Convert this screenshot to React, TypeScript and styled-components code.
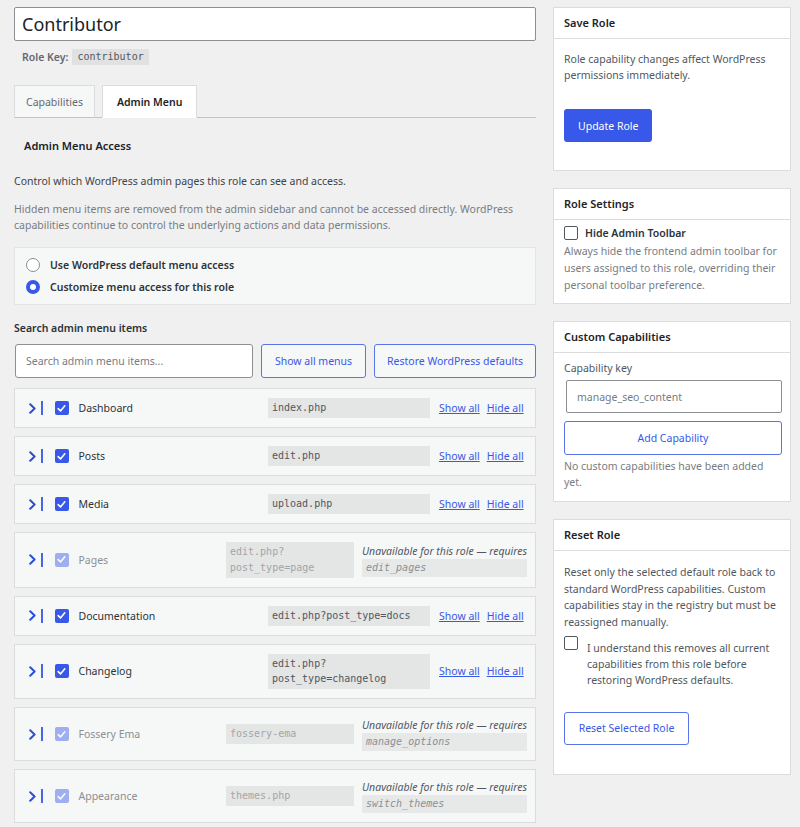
import React from "react";
import styled, { createGlobalStyle, css } from "styled-components";

const GlobalStyle = createGlobalStyle`
  html, body {
    margin: 0;
    background: #f0f0f1;
  }
  body {
    font-family: "Noto Sans", "Open Sans", sans-serif;
    font-size: 10.5px;
    line-height: 16px;
    color: #3c434a;
  }
  * {
    box-sizing: border-box;
  }
`;

const BLUE = "#3858e9";
const MONO = `"DejaVu Sans Mono", "Liberation Mono", monospace`;

type MenuItem = {
  name: string;
  slug: string;
  enabled: boolean;
  cap?: string;
};

const menuItems: MenuItem[] = [
  { name: "Dashboard", slug: "index.php", enabled: true },
  { name: "Posts", slug: "edit.php", enabled: true },
  { name: "Media", slug: "upload.php", enabled: true },
  { name: "Pages", slug: "edit.php?post_type=page", enabled: false, cap: "edit_pages" },
  { name: "Documentation", slug: "edit.php?post_type=docs", enabled: true },
  { name: "Changelog", slug: "edit.php?post_type=changelog", enabled: true },
  { name: "Fossery Ema", slug: "fossery-ema", enabled: false, cap: "manage_options" },
  { name: "Appearance", slug: "themes.php", enabled: false, cap: "switch_themes" },
];

const Chevron = () => (
  <svg width="7" height="11" viewBox="0 0 7 11" fill="none">
    <path d="M1.2 1.2 L5.6 5.5 L1.2 9.8" stroke="#2f4fd6" strokeWidth="2" strokeLinecap="round" strokeLinejoin="round" />
  </svg>
);

const CheckMark = () => (
  <svg width="9" height="9" viewBox="0 0 9 9" fill="none">
    <path d="M1.2 4.6 L3.5 6.9 L7.8 1.8" stroke="#fff" strokeWidth="1.6" strokeLinecap="round" strokeLinejoin="round" />
  </svg>
);

export default function App() {
  return (
    <>
      <GlobalStyle />
      <Page>
        <Main>
          <TitleInput defaultValue="Contributor" />
          <RoleKey>
            Role Key: <KeyCode>contributor</KeyCode>
          </RoleKey>

          <Tabs>
            <Tab>Capabilities</Tab>
            <Tab $active>Admin Menu</Tab>
          </Tabs>

          <SectionTitle>Admin Menu Access</SectionTitle>
          <Intro>Control which WordPress admin pages this role can see and access.</Intro>
          <Muted>
            Hidden menu items are removed from the admin sidebar and cannot be accessed directly. WordPress
            capabilities continue to control the underlying actions and data permissions.
          </Muted>

          <RadioBox>
            <RadioRow>
              <Radio />
              Use WordPress default menu access
            </RadioRow>
            <RadioRow>
              <Radio $checked />
              Customize menu access for this role
            </RadioRow>
          </RadioBox>

          <FieldLabel>Search admin menu items</FieldLabel>
          <Toolbar>
            <SearchInput placeholder="Search admin menu items..." />
            <OutlineButton $width={105}>Show all menus</OutlineButton>
            <OutlineButton $width={162}>Restore WordPress defaults</OutlineButton>
          </Toolbar>

          <MenuList>
            {menuItems.map((item) => (
              <MenuRow key={item.name}>
                <Expander>
                  <Chevron />
                  <ExpanderBar />
                </Expander>
                <MenuCheck $disabled={!item.enabled}>
                  <CheckMark />
                </MenuCheck>
                <MenuName $disabled={!item.enabled}>{item.name}</MenuName>
                <Slug $width={item.enabled ? 162 : 128} $disabled={!item.enabled}>
                  {item.slug}
                </Slug>
                {item.enabled ? (
                  <Actions>
                    <ActionLink href="#">Show all</ActionLink>
                    <ActionLink href="#">Hide all</ActionLink>
                  </Actions>
                ) : (
                  <Notice>
                    <NoticeText>Unavailable for this role — requires</NoticeText>
                    <NoticeCode>{item.cap}</NoticeCode>
                  </Notice>
                )}
              </MenuRow>
            ))}
          </MenuList>
        </Main>

        <Sidebar>
          <Panel>
            <PanelHeader>Save Role</PanelHeader>
            <PanelBody $pad="12px 10px 28px">
              <PanelText>Role capability changes affect WordPress permissions immediately.</PanelText>
              <PrimaryButton>Update Role</PrimaryButton>
            </PanelBody>
          </Panel>

          <Panel>
            <PanelHeader>Role Settings</PanelHeader>
            <PanelBody $pad="5px 10px 9px">
              <ToggleRow>
                <Box />
                Hide Admin Toolbar
              </ToggleRow>
              <Description>
                Always hide the frontend admin toolbar for users assigned to this role, overriding their
                personal toolbar preference.
              </Description>
            </PanelBody>
          </Panel>

          <Panel>
            <PanelHeader>Custom Capabilities</PanelHeader>
            <PanelBody $pad="7px 10px 11px">
              <PanelText>Capability key</PanelText>
              <CapInput placeholder="manage_seo_content" />
              <WideButton>Add Capability</WideButton>
              <EmptyNote>No custom capabilities have been added yet.</EmptyNote>
            </PanelBody>
          </Panel>

          <Panel>
            <PanelHeader>Reset Role</PanelHeader>
            <PanelBody $pad="13px 10px 29px">
              <ResetText>
                Reset only the selected default role back to standard WordPress capabilities. Custom
                capabilities stay in the registry but must be reassigned manually.
              </ResetText>
              <ConfirmRow>
                <Box />
                <ConfirmLabel>
                  I understand this removes all current capabilities from this role before restoring
                  WordPress defaults.
                </ConfirmLabel>
              </ConfirmRow>
              <ResetButton>Reset Selected Role</ResetButton>
            </PanelBody>
          </Panel>
        </Sidebar>
      </Page>
    </>
  );
}

const Page = styled.div`
  display: grid;
  grid-template-columns: 522px 238px;
  column-gap: 17px;
  align-items: start;
  padding: 7px 9px 0 14px;
`;

const Main = styled.div`
  display: flex;
  flex-direction: column;
`;

const TitleInput = styled.input`
  height: 34px;
  width: 100%;
  padding: 0 7px;
  border: 1px solid #8c8f94;
  border-radius: 2px;
  background: #fff;
  font-family: "Noto Sans", sans-serif;
  font-size: 18px;
  color: #1d2327;
  outline: none;
`;

const RoleKey = styled.div`
  display: flex;
  align-items: center;
  gap: 4px;
  margin-top: 8px;
  padding-left: 8px;
  font-weight: 600;
  color: #646970;
`;

const KeyCode = styled.code`
  font-family: ${MONO};
  font-size: 10px;
  line-height: 16px;
  padding: 0 5px;
  background: #e1e1e2;
  color: #50575e;
  font-weight: 400;
`;

const Tabs = styled.div`
  display: flex;
  gap: 7px;
  margin-top: 20px;
  border-bottom: 1px solid #c3c4c7;
`;

const Tab = styled.div<{ $active?: boolean }>`
  height: 33px;
  margin-bottom: -1px;
  padding: 0 11px;
  display: flex;
  align-items: center;
  border: 1px solid #dcdcde;
  border-bottom: 1px solid #c3c4c7;
  background: #f6f7f7;
  color: #646970;
  font-size: 10.5px;
  ${({ $active }) =>
    $active &&
    css`
      background: #fff;
      border-bottom-color: #fff;
      color: #1d2327;
      font-weight: 600;
      padding: 0 14px;
    `}
`;

const SectionTitle = styled.h3`
  margin: 20px 0 0 10px;
  font-size: 11px;
  line-height: 16px;
  font-weight: 600;
  color: #1d2327;
`;

const Intro = styled.p`
  margin: 19px 0 0;
  color: #3c434a;
`;

const Muted = styled.p`
  margin: 12px 0 0;
  color: #787c82;
`;

const RadioBox = styled.div`
  margin-top: 14px;
  padding: 9px 11px;
  display: flex;
  flex-direction: column;
  gap: 6px;
  background: #f6f7f7;
  border: 1px solid #e2e4e7;
`;

const RadioRow = styled.label`
  display: flex;
  align-items: center;
  gap: 10px;
  font-weight: 600;
  color: #2c3338;
`;

const Radio = styled.span<{ $checked?: boolean }>`
  width: 14px;
  height: 14px;
  border-radius: 50%;
  background: #fff;
  border: 1px solid #8c8f94;
  ${({ $checked }) =>
    $checked &&
    css`
      border: 4px solid ${BLUE};
    `}
`;

const FieldLabel = styled.div`
  margin-top: 15px;
  font-weight: 600;
  color: #2c3338;
`;

const Toolbar = styled.div`
  display: flex;
  gap: 8px;
  margin-top: 8px;
  padding-left: 1px;
`;

const SearchInput = styled.input`
  width: 238px;
  height: 34px;
  padding: 0 10px;
  border: 1px solid #8c8f94;
  border-radius: 3px;
  background: #fff;
  font-family: "Noto Sans", sans-serif;
  font-size: 10.5px;
  &::placeholder {
    color: #787c82;
  }
`;

const OutlineButton = styled.button<{ $width: number }>`
  width: ${({ $width }) => $width}px;
  height: 34px;
  padding: 0;
  border: 1px solid #5b73e8;
  border-radius: 3px;
  background: #f6f7f7;
  color: ${BLUE};
  font-family: "Noto Sans", sans-serif;
  font-size: 10.5px;
`;

const MenuList = styled.div`
  display: flex;
  flex-direction: column;
  gap: 8px;
  margin-top: 10px;
`;

const MenuRow = styled.div`
  display: flex;
  align-items: center;
  min-height: 40px;
  padding: 9px 8px 9px 14px;
  background: #f6f7f7;
  border: 1px solid #dcdcde;
`;

const Expander = styled.span`
  display: flex;
  align-items: center;
  gap: 5px;
`;

const ExpanderBar = styled.span`
  width: 1.5px;
  height: 14px;
  background: #4a66e6;
`;

const MenuCheck = styled.span<{ $disabled?: boolean }>`
  display: flex;
  align-items: center;
  justify-content: center;
  width: 14px;
  height: 14px;
  margin-left: 12px;
  border-radius: 2px;
  background: ${BLUE};
  opacity: ${({ $disabled }) => ($disabled ? 0.45 : 1)};
`;

const MenuName = styled.span<{ $disabled?: boolean }>`
  flex: 1;
  margin-left: 10px;
  color: ${({ $disabled }) => ($disabled ? "#8c8f94" : "#2c3338")};
`;

const Slug = styled.code<{ $width: number; $disabled?: boolean }>`
  width: ${({ $width }) => $width}px;
  padding: 2.25px 4px;
  font-family: ${MONO};
  font-size: 10px;
  line-height: 15.5px;
  background: rgba(0, 0, 0, 0.07);
  color: ${({ $disabled }) => ($disabled ? "#a2a5a9" : "#50575e")};
`;

const Actions = styled.span`
  display: flex;
  gap: 7px;
  width: 88px;
  margin-left: 9px;
`;

const ActionLink = styled.a`
  color: ${BLUE};
  text-decoration: underline;
  white-space: nowrap;
`;

const Notice = styled.span`
  display: flex;
  flex-direction: column;
  width: 165px;
  margin-left: 8px;
`;

const NoticeText = styled.span`
  font-style: italic;
  white-space: nowrap;
  color: #50575e;
`;

const NoticeCode = styled.code`
  padding: 1px 4px;
  font-family: ${MONO};
  font-size: 10px;
  line-height: 16px;
  font-style: italic;
  background: rgba(0, 0, 0, 0.06);
  color: #8c8f94;
`;

const Sidebar = styled.div`
  display: flex;
  flex-direction: column;
  gap: 17px;
`;

const Panel = styled.section`
  background: #fff;
  border: 1px solid #dcdcde;
`;

const PanelHeader = styled.h2`
  margin: 0;
  height: 31px;
  padding: 0 10px;
  display: flex;
  align-items: center;
  border-bottom: 1px solid #dcdcde;
  font-size: 11px;
  font-weight: 600;
  color: #1d2327;
`;

const PanelBody = styled.div<{ $pad: string }>`
  display: flex;
  flex-direction: column;
  align-items: flex-start;
  padding: ${({ $pad }) => $pad};
  color: #50575e;
`;

const PanelText = styled.p`
  margin: 0;
`;

const PrimaryButton = styled.button`
  margin-top: 26px;
  height: 33px;
  padding: 0 14px;
  border: none;
  border-radius: 3px;
  background: ${BLUE};
  color: #fff;
  font-family: "Noto Sans", sans-serif;
  font-size: 10.5px;
`;

const ToggleRow = styled.label`
  display: flex;
  align-items: center;
  gap: 7px;
  font-weight: 600;
  color: #2c3338;
`;

const Box = styled.span`
  flex: none;
  width: 14px;
  height: 14px;
  border: 1px solid #50575e;
  border-radius: 2px;
  background: #fff;
`;

const Description = styled.p`
  margin: 2px 0 0;
  line-height: 17px;
  color: #787c82;
`;

const CapInput = styled.input`
  margin: 4px 0 0 2px;
  width: 216px;
  height: 33px;
  padding: 0 10px;
  border: 1px solid #8c8f94;
  border-radius: 2px;
  font-family: "Noto Sans", sans-serif;
  font-size: 10.5px;
  &::placeholder {
    color: #787c82;
  }
`;

const WideButton = styled.button`
  margin-top: 8px;
  width: 218px;
  height: 34px;
  border: 1px solid #5b73e8;
  border-radius: 3px;
  background: #fff;
  color: ${BLUE};
  font-family: "Noto Sans", sans-serif;
  font-size: 10.5px;
`;

const EmptyNote = styled.p`
  margin: 3px 0 0;
  color: #787c82;
`;

const ResetText = styled.p`
  margin: 0;
  line-height: 16.7px;
`;

const ConfirmRow = styled.label`
  display: flex;
  align-items: flex-start;
  gap: 9px;
  margin-top: 5px;
`;

const ConfirmLabel = styled.span`
  padding-top: 4px;
  color: #50575e;
`;

const ResetButton = styled.button`
  margin-top: 24px;
  width: 125px;
  height: 33px;
  border: 1px solid #5b73e8;
  border-radius: 3px;
  background: #fff;
  color: ${BLUE};
  font-family: "Noto Sans", sans-serif;
  font-size: 10.5px;
`;
